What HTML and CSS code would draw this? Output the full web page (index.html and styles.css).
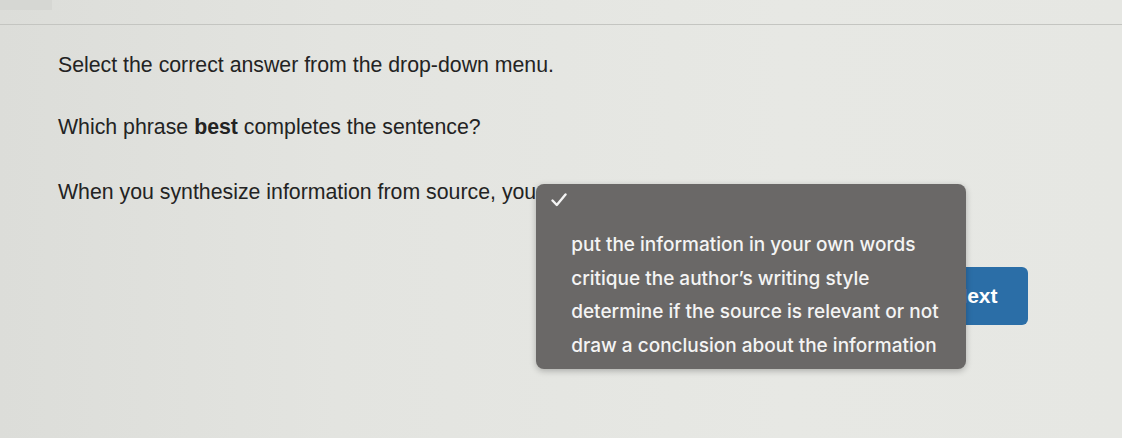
FILE: index.html
```html
<!DOCTYPE html>
<html>
<head>
<meta charset="utf-8">
<link rel="stylesheet" href="styles.css">
</head>
<body>
<div class="topbar"><div class="tab"></div></div>
<main class="question">
  <p class="instr">Select the correct answer from the drop-down menu.</p>
  <p class="prompt">Which phrase <b>best</b> completes the sentence?</p>
  <div class="sentence">
    <span>When you synthesize information from source, you</span>
    <div class="select">
      <div class="menu">
        <svg class="check" width="16" height="14" viewBox="0 0 16 14"><path d="M1.5 7.5 L5.8 12 L14.5 1.5" fill="none" stroke="#f4f4f4" stroke-width="2.4" stroke-linecap="round" stroke-linejoin="round"/></svg>
        <ul class="options">
          <li>put the information in your own words</li>
          <li>critique the author’s writing style</li>
          <li>determine if the source is relevant or not</li>
          <li>draw a conclusion about the information</li>
        </ul>
      </div>
    </div>
  </div>
  <div class="actions">
    <button class="next">Next</button>
  </div>
</main>
</body>
</html>
```
FILE: styles.css
```css
html, body {
  margin: 0;
  padding: 0;
}
body {
  width: 1122px;
  height: 438px;
  overflow: hidden;
  background: linear-gradient(90deg, #dcddd9 0%, #e3e4e0 30%, #e7e8e4 70%, #e6e7e3 100%);
  font-family: "Liberation Sans", Arial, sans-serif;
  color: #232323;
}
.topbar {
  height: 24px;
  border-bottom: 1px solid #c4c5c1;
  position: relative;
}
.tab {
  width: 52px;
  height: 10px;
  background: #d6d7d3;
}
.question {
  padding-left: 58px;
  padding-top: 28px;
}
.instr, .prompt {
  margin: 0;
  font-size: 21.3px;
  line-height: 24px;
}
.instr {
  margin-bottom: 38px;
}
.prompt {
  margin-bottom: 41px;
}
.prompt b {
  font-weight: bold;
}
.sentence {
  font-size: 21.3px;
  line-height: 24px;
  display: flex;
  align-items: flex-start;
}
.select {
  position: relative;
  width: 0;
  height: 24px;
}
.menu {
  position: absolute;
  left: 0;
  top: 4px;
  width: 430px;
  height: 185px;
  background: #6a6867;
  border-radius: 8px;
  box-shadow: 0 2px 6px rgba(0,0,0,0.25);
  color: #f4f4f4;
  font-family: Inter, "Open Sans", sans-serif;
  font-weight: 500;
  font-size: 19px;
  box-sizing: border-box;
  padding: 9px 0 0 15px;
  z-index: 2;
}
.check {
  display: block;
}
.options {
  list-style: none;
  margin: 0;
  padding: 21px 0 0 20px;
}
.options li {
  line-height: 33.5px;
  white-space: nowrap;
}
.actions {
  display: flex;
  justify-content: flex-end;
  padding-right: 94px;
  margin-top: 63px;
}
.next {
  width: 94px;
  height: 58px;
  background: #2b6ea7;
  color: #ffffff;
  border: none;
  border-radius: 6px;
  font-family: "Liberation Sans", Arial, sans-serif;
  font-weight: bold;
  font-size: 21px;
  text-align: left;
  padding-left: 18px;
}
```
